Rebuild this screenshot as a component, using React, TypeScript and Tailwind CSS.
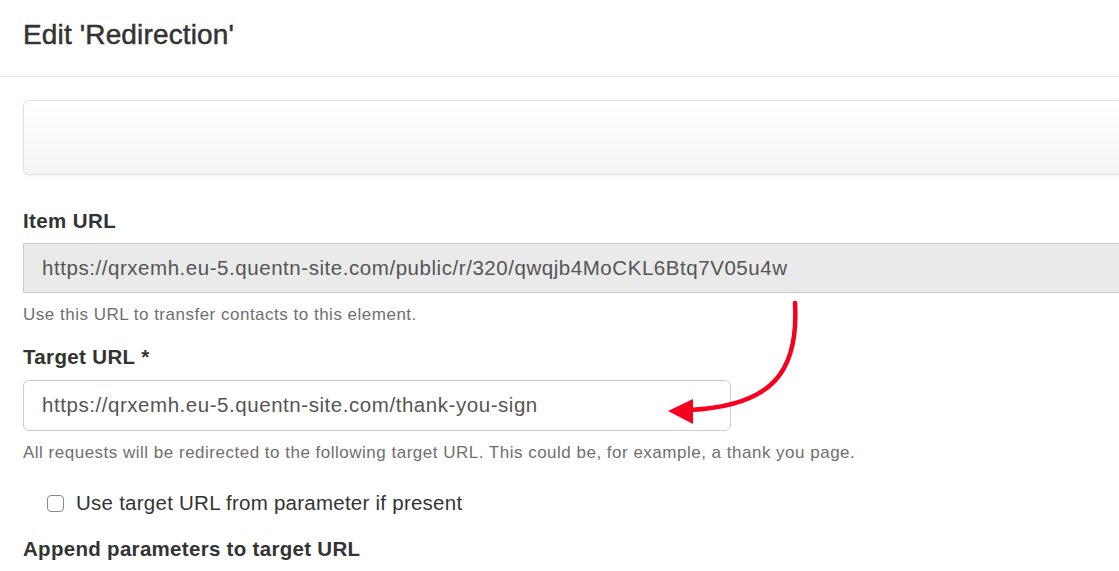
import React from 'react';

// Annotated arrow pointing from the item URL to the target URL field
const RedArrow: React.FC = () => (
  <svg
    className="absolute left-0 top-0 pointer-events-none"
    width="1119"
    height="571"
    viewBox="0 0 1119 571"
  >
    <path
      d="M795 303 C 799 372, 772 406, 690 410"
      fill="none"
      stroke="#f6001e"
      strokeWidth="4.5"
      strokeLinecap="round"
    />
    <polygon points="668,411 693,399 693,424" fill="#f6001e" />
  </svg>
);

const App: React.FC = () => {
  return (
    <div
      className="relative w-[1119px] h-[571px] overflow-hidden bg-white text-[#333]"
      style={{ fontFamily: '"Liberation Sans", Arial, Helvetica, sans-serif' }}
    >
      {/* Header */}
      <div className="h-[77px] border-b border-[#e5e5e5] flex items-center pl-[23px] pb-[6px]">
        <h1 className="text-[28px] leading-none tracking-[0.15px] [-webkit-text-stroke:0.5px_#333] text-[#333]">
          Edit 'Redirection'
        </h1>
      </div>

      <div className="pl-[23px] w-[1200px]">
        {/* Empty panel */}
        <div className="mt-[23px] h-[75px] rounded-[6px] border border-[#e0e0e0] bg-gradient-to-b from-white to-[#f5f5f5] shadow-[0_1px_3px_rgba(0,0,0,0.06)]" />

        {/* Item URL */}
        <label className="block mt-[34px] text-[20.5px] leading-[24px] tracking-[0.4px] font-bold">Item URL</label>
        <div className="mt-[10px] h-[50px] border border-[#cccccc] bg-[#eaeaea] flex items-center pl-[18px] text-[20.5px] tracking-[0.55px] text-[#555]">
          https://qrxemh.eu-5.quentn-site.com/public/r/320/qwqjb4MoCKL6Btq7V05u4w
        </div>
        <p className="mt-[11px] text-[17px] leading-[22px] tracking-[0.5px] text-[#6f6f6f]">
          Use this URL to transfer contacts to this element.
        </p>

        {/* Target URL */}
        <label className="block mt-[19px] text-[20.5px] leading-[24px] tracking-[0.35px] font-bold">Target URL *</label>
        <div className="mt-[11px] w-[708px] h-[51px] rounded-[6px] border border-[#cccccc] bg-white flex items-center pl-[18px] text-[20.5px] tracking-[0.55px] text-[#555]">
          https://qrxemh.eu-5.quentn-site.com/thank-you-sign
        </div>
        <p className="mt-[11px] text-[17px] leading-[22px] tracking-[0.5px] text-[#6f6f6f]">
          All requests will be redirected to the following target URL. This could be, for example, a thank you page.
        </p>

        {/* Checkbox */}
        <div className="mt-[25px] h-[28px] flex items-center pl-[24px]">
          <span className="w-[17px] h-[17px] rounded-[4px] border border-[#8a8a8a] bg-white" />
          <span className="ml-[12px] text-[20.5px] tracking-[0.25px] text-[#333]">Use target URL from parameter if present</span>
        </div>

        <label className="block mt-[20px] text-[20.5px] leading-[24px] tracking-[0.3px] font-bold">
          Append parameters to target URL
        </label>
      </div>

      <RedArrow />
    </div>
  );
};

export default App;
